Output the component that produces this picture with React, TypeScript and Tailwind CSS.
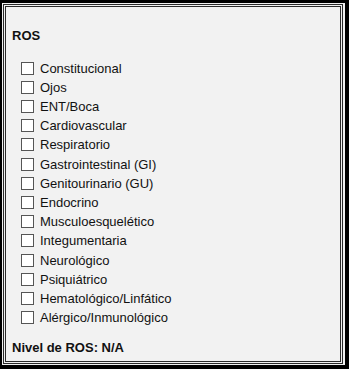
import React from 'react';

const systems = [
    'Constitucional',
    'Ojos',
    'ENT/Boca',
    'Cardiovascular',
    'Respiratorio',
    'Gastrointestinal (GI)',
    'Genitourinario (GU)',
    'Endocrino',
    'Musculoesquelético',
    'Integumentaria',
    'Neurológico',
    'Psiquiátrico',
    'Hematológico/Linfático',
    'Alérgico/Inmunológico',
];

export default function App() {
    return (
        <div className="w-[349px] h-[369px] bg-black pt-[3px] pl-[2px] pr-[4px] pb-[4px] font-['Liberation_Sans',Arial,sans-serif] text-[13px] text-[#111]">
            <div className="h-full bg-[#f2f2f2] p-[1px] pr-[2px]">
                <div className="h-full border-[3px] border-double border-[#2b2b2b] pl-[6px] pt-[21px]">
                    <h2 className="font-bold leading-[15px]">ROS</h2>
                    <ul className="mt-[15.4px] ml-[9px]">
                        {systems.map((name) => (
                            <li key={name} className="flex items-center h-[19.23px] gap-[6px]">
                                <span className="w-[13px] h-[13px] border border-[#555] bg-white shrink-0" />
                                <span className="leading-[15px]">{name}</span>
                            </li>
                        ))}
                    </ul>
                    <p className="mt-[13px] font-bold leading-[15px]">Nivel de ROS: N/A</p>
                </div>
            </div>
        </div>
    );
}
